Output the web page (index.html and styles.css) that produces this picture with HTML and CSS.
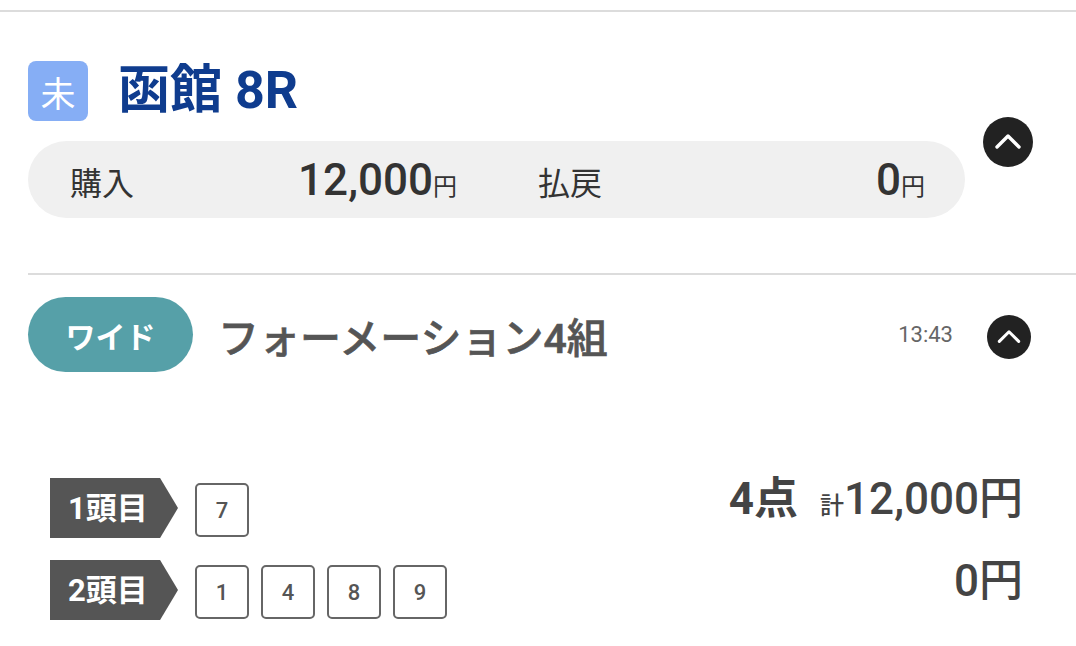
FILE: index.html
```html
<!DOCTYPE html>
<html lang="ja">
<head>
  <meta charset="UTF-8">
  <meta name="viewport" content="width=device-width, initial-scale=1.0">
  <title>購入履歴</title>
  <link rel="stylesheet" href="styles.css">
</head>
<body>

<div class="history">
  <section class="race">
    <div class="race-info">
      <div class="race-title">
        <span class="day-badge">未</span>
        <h1>函館 8R</h1>
      </div>
      <div class="race-summary">
        <div class="sum-item">
          <span class="sum-label">購入</span>
          <span class="sum-value">12,000<small>円</small></span>
        </div>
        <div class="sum-item">
          <span class="sum-label">払戻</span>
          <span class="sum-value">0<small>円</small></span>
        </div>
      </div>
    </div>
    <button class="toggle" aria-label="閉じる">
      <svg viewBox="0 0 50 50" width="50" height="50"><path d="M14 30 L25 19 L36 30" /></svg>
    </button>
  </section>

  <section class="bet">
    <div class="bet-head">
      <span class="bet-type">ワイド</span>
      <span class="bet-name">フォーメーション4組</span>
      <span class="bet-time">13:43</span>
      <button class="toggle toggle-sm" aria-label="閉じる">
        <svg viewBox="0 0 50 50" width="44" height="44"><path d="M14 30 L25 19 L36 30" /></svg>
      </button>
    </div>

    <div class="bet-body">
      <div class="picks">
        <div class="pick-row">
          <span class="pick-label">1頭目</span>
          <div class="horses">
            <span class="horse">7</span>
          </div>
        </div>
        <div class="pick-row">
          <span class="pick-label">2頭目</span>
          <div class="horses">
            <span class="horse">1</span>
            <span class="horse">4</span>
            <span class="horse">8</span>
            <span class="horse">9</span>
          </div>
        </div>
      </div>
      <div class="amounts">
        <div class="amount-line"><span class="points">4点</span><span class="kei">計</span>12,000円</div>
        <div class="amount-line">0円</div>
      </div>
    </div>
  </section>
</div>

</body>
</html>
```

FILE: styles.css
```css
body {
  margin: 0;
  padding: 0;
  font-family: Roboto, "Noto Sans CJK JP", sans-serif;
  background-color: white;
  color: #333;
}

.history {
  margin-top: 10px;
  border-top: 2px solid #dcdcdc;
}

/* race block */
.race {
  margin-left: 28px;
  padding: 49px 43px 55px 0;
  border-bottom: 2px solid #dcdcdc;
  display: flex;
  align-items: center;
  gap: 18px;
}

.race-info {
  flex: 1;
}

.race-title {
  display: flex;
  align-items: center;
  height: 60px;
}

.day-badge {
  width: 60px;
  height: 60px;
  border-radius: 8px;
  background-color: #86aef5;
  color: white;
  font-size: 35px;
  display: flex;
  align-items: center;
  justify-content: center;
}

.race-title h1 {
  margin: 0 0 0 30px;
  font-size: 52px;
  font-weight: bold;
  line-height: 60px;
  color: #0f3c8e;
}

.race-summary {
  margin-top: 20px;
  height: 77px;
  border-radius: 39px;
  background-color: #f0f0f0;
  padding: 0 40px 0 42px;
  display: grid;
  grid-template-columns: 1fr 1fr;
  column-gap: 81px;
  align-items: center;
}

.sum-item {
  display: flex;
  justify-content: space-between;
  align-items: baseline;
}

.sum-label {
  font-size: 32px;
  color: #333;
}

.sum-value {
  font-size: 44px;
  font-weight: 500;
  color: #333;
}

.sum-value small {
  font-size: 24px;
  font-weight: 400;
}

.toggle {
  flex: none;
  width: 50px;
  height: 50px;
  margin-top: 4px;
  padding: 0;
  border: none;
  border-radius: 50%;
  background-color: #222;
  display: flex;
  align-items: center;
  justify-content: center;
  cursor: pointer;
}

.toggle svg path {
  fill: none;
  stroke: white;
  stroke-width: 3.4;
  stroke-linecap: round;
  stroke-linejoin: round;
}

.toggle-sm {
  width: 44px;
  height: 44px;
}

/* bet block */
.bet {
  margin-left: 28px;
  padding: 22px 45px 0 0;
}

.bet-head {
  display: flex;
  align-items: center;
}

.bet-type {
  width: 165px;
  height: 75px;
  border-radius: 38px;
  background-color: #56a0a8;
  color: white;
  font-size: 30px;
  font-weight: bold;
  display: flex;
  align-items: center;
  justify-content: center;
}

.bet-name {
  flex: 1;
  margin-left: 25px;
  font-size: 41px;
  font-weight: 500;
  color: #555;
  -webkit-text-stroke: 0.6px #555;
}

.bet-time {
  font-size: 22px;
  color: #666;
  margin-right: 34px;
}

.bet-body {
  margin-top: 106px;
  padding: 0 8px 0 22px;
  display: flex;
  justify-content: space-between;
  align-items: flex-start;
}

.picks {
  display: flex;
  flex-direction: column;
  gap: 22px;
}

.pick-row {
  display: flex;
  align-items: flex-end;
  gap: 17px;
}

.pick-label {
  width: 128px;
  height: 60px;
  box-sizing: border-box;
  padding: 0 0 6px 18px;
  background-color: #555;
  color: white;
  font-size: 31px;
  font-weight: bold;
  display: flex;
  align-items: center;
  clip-path: polygon(0 0, 86% 0, 100% 50%, 86% 100%, 0 100%);
}

.horses {
  display: flex;
  gap: 12px;
  margin-bottom: 1px;
}

.horse {
  width: 54px;
  height: 54px;
  box-sizing: border-box;
  border: 2px solid #666;
  border-radius: 5px;
  color: #555;
  font-size: 22px;
  font-weight: 500;
  display: flex;
  align-items: center;
  justify-content: center;
}

.amounts {
  margin-top: -16px;
  text-align: right;
  color: #444;
  font-size: 44px;
  font-weight: 500;
  line-height: 75px;
}

.points {
  font-weight: bold;
  margin-right: 22px;
}

.kei {
  font-size: 24px;
}
```
